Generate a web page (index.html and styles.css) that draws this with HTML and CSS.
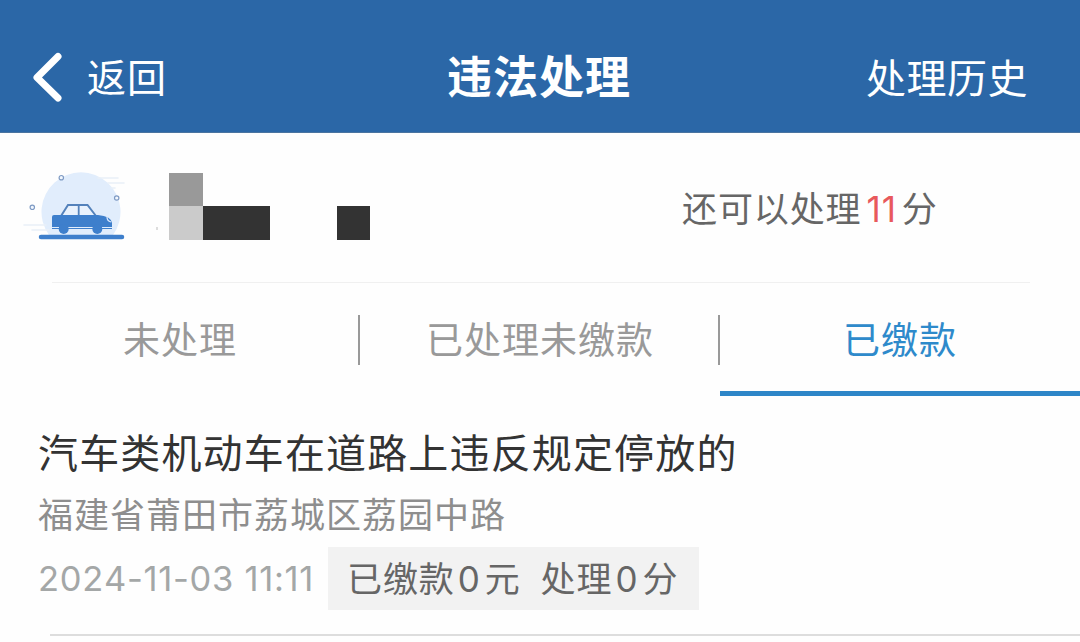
FILE: index.html
```
<!DOCTYPE html>
<html lang="zh-CN">
<head>
  <meta charset="UTF-8" />
  <meta name="viewport" content="width=device-width,initial-scale=1" />
  <title>违法处理</title>
  <link rel="stylesheet" href="styles.css">
</head>

<body>
  <header class="navbar">
    <a class="back" href="#">
      <svg class="back-icon" width="30" height="50" viewBox="0 0 30 50" fill="none" stroke="#fff" stroke-width="7" stroke-linecap="round" stroke-linejoin="round">
        <path d="M26 4.500L5 25.500L26 46"/>
      </svg>
      <span>返回</span>
    </a>
    <h1>违法处理</h1>
    <a class="history" href="#">处理历史</a>
  </header>

  <section class="vehicle">
    <!-- car illustration -->
    <svg class="car" width="110" height="80" viewBox="0 0 110 80">
      <path d="M29 67A39.500 39.500 0 1 1 93 67Z" fill="#e1edfc"/>
      <g stroke="#e9f0f8" stroke-width="1.500" stroke-linecap="round">
        <path d="M78 10H98M88 15H104M91 20H95M4 57H26M12 62H29"/>
      </g>
      <g fill="#f2f7fe" stroke="#7f9bc4" stroke-width="1.200">
        <circle cx="41.300" cy="9.700" r="2.200"/>
        <circle cx="96.700" cy="30" r="2.200"/>
        <circle cx="12.300" cy="39.300" r="2.200"/>
      </g>
      <path d="M41 48L48 37H67.500L76 48" fill="#e9f2fd" stroke="#5482bb" stroke-width="2"/>
      <path d="M58.700 37V48" stroke="#5482bb" stroke-width="1.800"/>
      <path d="M32 49Q32 47 34 47H78Q91 48 92 55V61H32Z" fill="#3e7fcc"/>
      <path d="M87 49Q87 53 91 54" fill="none" stroke="#dceaff" stroke-width="1.200"/>
      <path d="M32 59.500H92" stroke="#e1edfc" stroke-width="1"/>
      <circle cx="43.700" cy="61" r="5" fill="#3e7fcc"/>
      <circle cx="77.300" cy="61" r="5" fill="#3e7fcc"/>
      <path d="M21 69H102" stroke="#3e7fcc" stroke-width="4.500" stroke-linecap="round"/>
    </svg>
    <!-- masked plate number -->
    <svg class="plate" width="216" height="67" viewBox="0 0 216 67">
      <path d="M1 54H3V57H1Z" fill="#ddd"/>
      <path d="M14 0H48V33H14Z" fill="#999"/>
      <path d="M14 33H48V67H14Z" fill="#cbcbcb"/>
      <path d="M48 33H115V67H48ZM182 33H215V67H182Z" fill="#333"/>
    </svg>
    <p class="remain">还可以处理<span class="points">11</span>分</p>
  </section>

  <nav class="tabs">
    <a class="tab" href="#">未处理</a>
    <a class="tab" href="#">已处理未缴款</a>
    <a class="tab active" href="#">已缴款</a>
  </nav>

  <main class="record">
    <h2>汽车类机动车在道路上违反规定停放的</h2>
    <p class="address">福建省莆田市荔城区荔园中路</p>
    <div class="meta">
      <time>2024-11-03 11:11</time>
      <div class="tag">
        <span>已缴款<b>0</b>元</span>
        <span>处理<b>0</b>分</span>
      </div>
    </div>
  </main>
</body>
</html>
```
FILE: styles.css
```
*{box-sizing:border-box;}
body{
  margin:0;
  height:642px;
  overflow:hidden;
  font-family:Inter,"Noto Sans CJK SC",sans-serif;
  background:#fefefe;
  color:#333;
}
h1,h2,p{
  margin:0;
  font-weight:400;
}
a{
  color:inherit;
  text-decoration:none;
}

.navbar{
  height:133px;
  padding:22px 52px 0 32px;
  display:grid;
  grid-template-columns:1fr auto 1fr;
  align-items:center;
  background:#2b67a7;
  border-bottom:1px solid #4a74a0;
  color:#fff;
}
.back{
  display:flex;
  align-items:center;
  gap:25px;
  font-size:39px;
  letter-spacing:1px;
}
.back span{
  margin-top:-4px;
}
.navbar h1{
  margin:-6px -9px 0 9px;
  font-size:45px;
  font-weight:700;
  letter-spacing:1px;
}
.history{
  margin-top:-3px;
  text-align:right;
  font-size:40px;
  letter-spacing:.500px;
}

.vehicle{
  height:150px;
  margin:0 50px 0 52px;
  display:flex;
  align-items:center;
  border-bottom:1px solid #f0f0f0;
}
.car{
  margin:0 0 0 -32px;
}
.plate{
  margin:-2px 0 0 25px;
}
.remain{
  margin:-2px 0 0 311px;
  font-size:35px;
  letter-spacing:.900px;
  color:#666;
  white-space:nowrap;
}
.points{
  margin:0 5px 0 5px;
  font-kerning:none;
  color:#e8595c;
}

.tabs{
  height:113px;
  display:flex;
}
.tab{
  position:relative;
  flex:1;
  padding-top:30px;
  text-align:center;
  font-size:37px;
  line-height:56px;
  letter-spacing:1px;
  color:#999;
}
.tab + .tab::before{
  content:"";
  position:absolute;
  left:-2px;
  top:32px;
  width:2px;
  height:50px;
  background:#999;
}
.tab.active{
  color:#2e8acb;
  border-bottom:5px solid #2e86c8;
}

.record{
  height:239px;
  margin-left:38px;
  padding-top:30px;
}
.record h2{
  font-size:40px;
  line-height:56px;
  letter-spacing:1.150px;
}
.address{
  margin-top:8px;
  font-size:35px;
  line-height:50px;
  letter-spacing:1px;
  color:#8e8e8e;
}
.meta{
  margin-top:7px;
  display:flex;
  align-items:center;
}
.meta time{
  width:290px;
  font-size:34.500px;
  font-kerning:none;
  letter-spacing:.700px;
  white-space:nowrap;
  color:#a4a7a7;
}
.tag{
  width:371px;
  height:63px;
  padding:0 0 4px 19px;
  display:flex;
  align-items:center;
  gap:20px;
  background:#f2f2f2;
  color:#666;
  font-size:35px;
  letter-spacing:.900px;
  white-space:nowrap;
}
.tag b{
  font-weight:400;
  margin:0 4px 0 3px;
}
.record::after{
  content:"";
  display:block;
  margin:24px 0 0 12px;
  height:2px;
  background:#ddd;
}
```
